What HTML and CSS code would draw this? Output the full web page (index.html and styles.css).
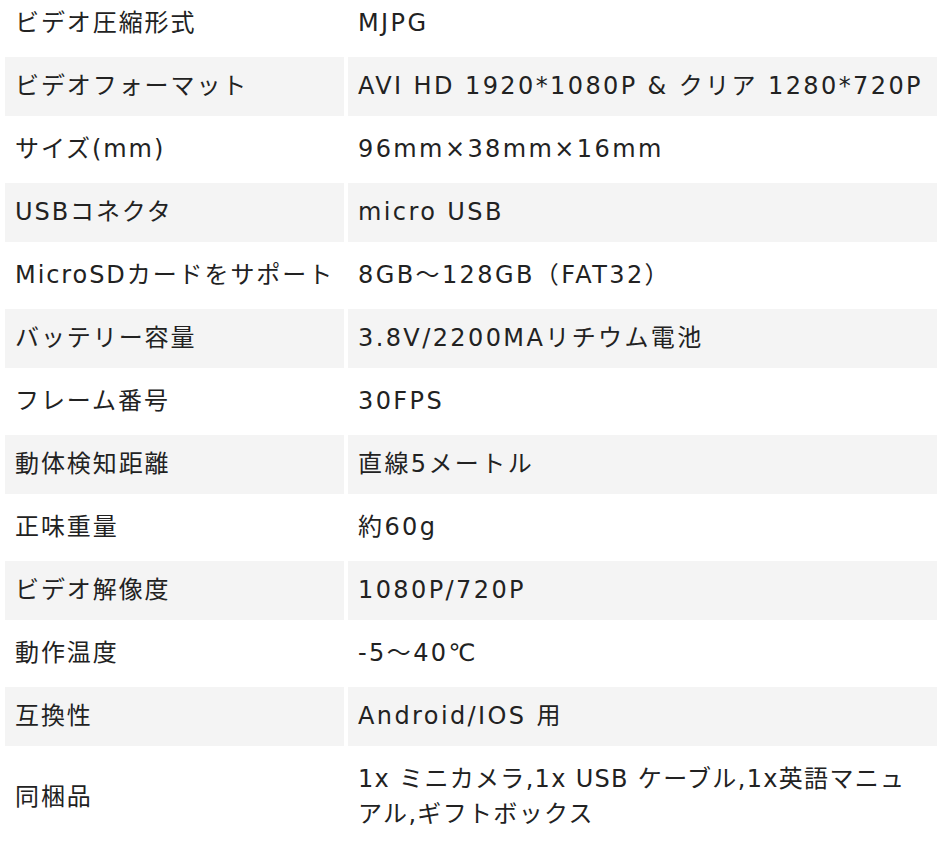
FILE: index.html
```html
<!DOCTYPE html>
<html lang="ja">
<head>
<meta charset="utf-8">
<title>仕様</title>
<link rel="stylesheet" href="styles.css">
</head>
<body>
<table class="spec">
  <tbody>
    <tr><td class="key">ビデオ圧縮形式</td><td class="val">MJPG</td></tr>
    <tr><td class="key">ビデオフォーマット</td><td class="val">AVI HD 1920*1080P &amp; クリア 1280*720P</td></tr>
    <tr><td class="key">サイズ(mm)</td><td class="val">96mm×38mm×16mm</td></tr>
    <tr><td class="key">USBコネクタ</td><td class="val">micro USB</td></tr>
    <tr><td class="key">MicroSDカードをサポート</td><td class="val">8GB～128GB（FAT32）</td></tr>
    <tr><td class="key">バッテリー容量</td><td class="val">3.8V/2200MAリチウム電池</td></tr>
    <tr><td class="key">フレーム番号</td><td class="val">30FPS</td></tr>
    <tr><td class="key">動体検知距離</td><td class="val">直線5メートル</td></tr>
    <tr><td class="key">正味重量</td><td class="val">約60g</td></tr>
    <tr><td class="key">ビデオ解像度</td><td class="val">1080P/720P</td></tr>
    <tr><td class="key">動作温度</td><td class="val">-5～40℃</td></tr>
    <tr><td class="key">互換性</td><td class="val">Android/IOS 用</td></tr>
    <tr><td class="key">同梱品</td><td class="val val-tight">1x ミニカメラ,1x USB ケーブル,1x英語マニュ<br>アル,ギフトボックス</td></tr>
  </tbody>
</table>
</body>
</html>
```
FILE: styles.css
```css
html, body {
  margin: 0;
  padding: 0;
  background: #ffffff;
}

body {
  font-family: "DejaVu Sans", "Noto Sans CJK JP", sans-serif;
  color: #222222;
  font-size: 24px;
  line-height: 35px;
  letter-spacing: 0.08em;
}

.spec {
  width: 940px;
  margin: -10px 0 0 1px;
  border-collapse: separate;
  border-spacing: 4px;
  table-layout: fixed;
}

.spec td {
  padding: 12px 10px;
  vertical-align: middle;
  text-align: left;
  white-space: nowrap;
}

.spec .key {
  width: 319px;
}

.spec .val {
  width: 569px;
  letter-spacing: 0.1em;
}

.spec .val-tight {
  letter-spacing: 0.055em;
}

.spec tr:nth-child(even) td {
  background: #f4f4f4;
}
```
